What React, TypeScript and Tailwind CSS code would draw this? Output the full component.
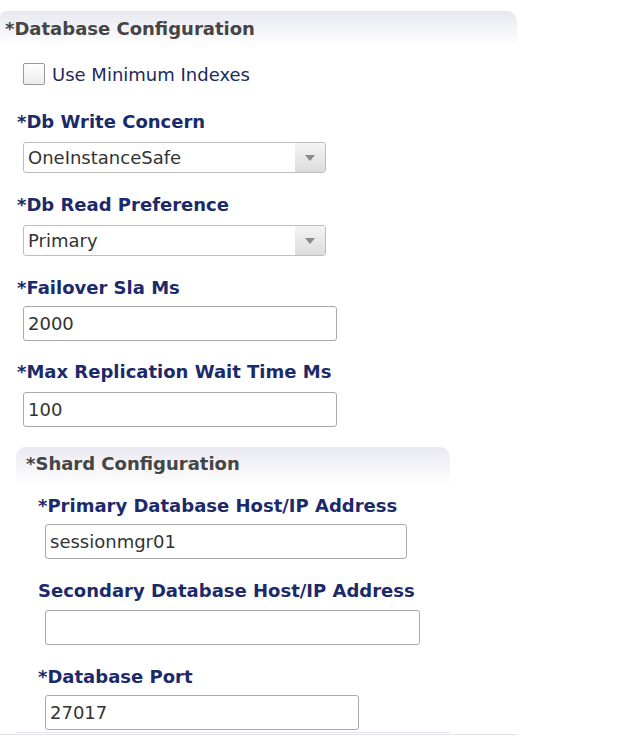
import React from "react";

const font = { fontFamily: '"DejaVu Sans", Verdana, sans-serif' };

function Label({ children, className = "" }: { children: React.ReactNode; className?: string }) {
  return (
    <div className={"text-[18px] leading-[20px] font-bold text-[#1c2a6a] whitespace-nowrap " + className}>{children}</div>
  );
}

function TextBox({ value, w, className = "" }: { value: string; w: string; className?: string }) {
  return (
    <div
      className={
        "h-[35px] border border-[#a9a9a9] rounded-[3px] bg-white flex items-center pl-[4px] text-[18px] leading-[20px] text-[#333] " +
        w +
        " " +
        className
      }
    >
      {value}
    </div>
  );
}

function Select({ value, className = "" }: { value: string; className?: string }) {
  return (
    <div
      className={
        "h-[31px] w-[303px] border border-[#bdbdbd] rounded-[3px] bg-white flex items-stretch text-[18px] leading-[20px] text-[#333] " +
        className
      }
    >
      <div className="flex-1 flex items-center pl-[4px]">{value}</div>
      <div className="w-[30px] bg-gradient-to-b from-[#f4f4f4] to-[#dcdcdc] flex items-center justify-center rounded-r-[2px]">
        <svg width="10" height="6" viewBox="0 0 10 6">
          <path d="M0 0 L10 0 L5 6 Z" fill="#8a8a8a" />
        </svg>
      </div>
    </div>
  );
}

export default function App() {
  return (
    <div className="w-[625px] h-[747px] bg-white overflow-hidden" style={font}>
      <div className="w-[517px] border-b border-[#e2e2ec] pb-[1px]">
        <div className="mt-[11px] h-[34px] rounded-tl-[6px] rounded-tr-[10px] bg-gradient-to-b from-[#e7e7f0] to-white pl-[5px] pt-[7px] text-[18px] leading-[22px] font-bold text-[#454545]">
          *Database Configuration
        </div>

        <div className="mt-[18px] ml-[23px] h-[22px] flex items-center">
          <div className="w-[22px] h-[22px] border border-[#9a9a9a] rounded-[2px] bg-gradient-to-b from-white to-[#ececec]" />
          <span className="ml-[7px] pt-[1px] text-[18px] leading-[22px] text-[#1c2a5e]">Use Minimum Indexes</span>
        </div>

        <div className="pl-[17px]">
          <Label className="mt-[27px]">*Db Write Concern</Label>
          <Select value="OneInstanceSafe" className="mt-[10px] ml-[6px]" />

          <Label className="mt-[22px]">*Db Read Preference</Label>
          <Select value="Primary" className="mt-[10px] ml-[6px]" />

          <Label className="mt-[22px]">*Failover Sla Ms</Label>
          <TextBox value="2000" w="w-[314px]" className="mt-[8px] ml-[6px]" />

          <Label className="mt-[21px]">*Max Replication Wait Time Ms</Label>
          <TextBox value="100" w="w-[314px]" className="mt-[10px] ml-[6px]" />

          <div className="mt-[20px] w-[434px] -ml-[1px] border-b border-[#e2e2ec] pb-[2px]">
            <div className="h-[38px] rounded-tl-[10px] rounded-tr-[10px] bg-gradient-to-b from-[#e9e9f1] to-white pl-[10px] pt-[6px] text-[18px] leading-[22px] font-bold text-[#454545]">
              *Shard Configuration
            </div>
            <div className="pl-[22px]">
              <Label className="mt-[11px]">*Primary Database Host/IP Address</Label>
              <TextBox value="sessionmgr01" w="w-[362px]" className="mt-[8px] ml-[7px]" />

              <Label className="mt-[22px]">Secondary Database Host/IP Address</Label>
              <TextBox value="" w="w-[375px]" className="mt-[9px] ml-[7px]" />

              <Label className="mt-[22px]">*Database Port</Label>
              <TextBox value="27017" w="w-[314px]" className="mt-[8px] ml-[7px]" />
            </div>
          </div>
        </div>
      </div>
    </div>
  );
}
